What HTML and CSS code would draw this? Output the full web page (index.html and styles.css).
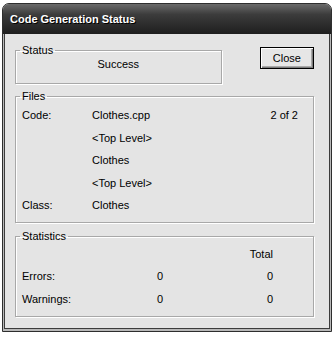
FILE: index.html
```html
<!DOCTYPE html>
<html lang="en">
<head>
  <meta charset="UTF-8" />
  <title>Code Generation Status</title>
  <link rel="stylesheet" href="styles.css">
</head>
<body>
  <div class="window">
    <div class="titlebar">Code Generation Status</div>
    <div class="client">
      <div class="top-row">
        <fieldset class="group status">
          <legend>Status</legend>
          <div class="status-text">Success</div>
        </fieldset>
        <button class="btn">Close</button>
      </div>

      <fieldset class="group files">
        <legend>Files</legend>
        <div class="files-grid">
          <span>Code:</span><span>Clothes.cpp</span><span class="right">2 of 2</span>
          <span></span><span>&lt;Top Level&gt;</span><span></span>
          <span></span><span>Clothes</span><span></span>
          <span></span><span>&lt;Top Level&gt;</span><span></span>
          <span>Class:</span><span>Clothes</span><span></span>
        </div>
      </fieldset>

      <fieldset class="group stats">
        <legend>Statistics</legend>
        <div class="stats-grid">
          <span></span><span></span><span class="right">Total</span>
          <span>Errors:</span><span class="right">0</span><span class="right">0</span>
          <span>Warnings:</span><span class="right">0</span><span class="right">0</span>
        </div>
      </fieldset>
    </div>
  </div>
</body>
</html>
```

FILE: styles.css
```css
html, body {
  margin: 0;
  padding: 0;
  background-color: #FFFFFF;
  font-family: 'Liberation Sans', Arial, sans-serif;
  font-size: 11px;
  color: #000000;
}
.window {
  box-sizing: border-box;
  width: 330px;
  height: 329px;
  margin: 3px 0 0 2px;
  border: 1px solid #2e2e2e;
  border-radius: 7px 7px 0 0;
  background-color: #b8b8b8;
  display: flex;
  flex-direction: column;
  overflow: hidden;
}
.titlebar {
  height: 30px;
  line-height: 30px;
  padding-left: 7px;
  background: linear-gradient(#6a6a6a, #3c3c3c 35%, #1e1e1e);
  color: #FFFFFF;
  font-weight: bold;
  font-size: 11px;
  text-shadow: 1px 1px 0 #000000;
}
.client {
  flex: 1;
  margin: 0 1px 2px 1px;
  border: 1px solid #3c3c3c;
  border-top: none;
  background-color: #e4e4e4;
  padding: 10px 15px 0 10px;
}
.top-row {
  display: flex;
  align-items: flex-start;
}
.group {
  margin: 0;
  padding: 0 4px;
  border: 1px solid #a8a8a8;
  box-shadow: inset 1px 1px 0 #FFFFFF, 1px 1px 0 #FFFFFF;
}
.group legend {
  padding: 0 2px;
  line-height: 13px;
}
.status {
  width: 209px;
  box-sizing: border-box;
  height: 40px;
}
.status-text {
  text-align: center;
  padding-top: 1px;
}
.btn {
  width: 55px;
  height: 22px;
  margin: 3px 0 0 38px;
  padding: 0;
  font-family: inherit;
  font-size: 11px;
  color: #000000;
  background-color: #e6e6e6;
  border: 1px solid #000000;
  box-shadow: inset 1px 1px 0 #FFFFFF, inset -1px -1px 0 #7c7c7c, inset -2px -2px 0 #a8a8a8;
}
.files {
  margin-top: 6px;
}
.files-grid {
  display: grid;
  grid-template-columns: 70px 1fr auto;
  grid-auto-rows: 22.5px;
  align-items: center;
  padding: 1px 11px 5px 2px;
}
.stats {
  margin-top: 7px;
}
.stats-grid {
  display: grid;
  grid-template-columns: 100px 41px 110px;
  grid-auto-rows: 22.5px;
  align-items: center;
  padding: 0 0 6px 2px;
}
.right {
  text-align: right;
}
```
